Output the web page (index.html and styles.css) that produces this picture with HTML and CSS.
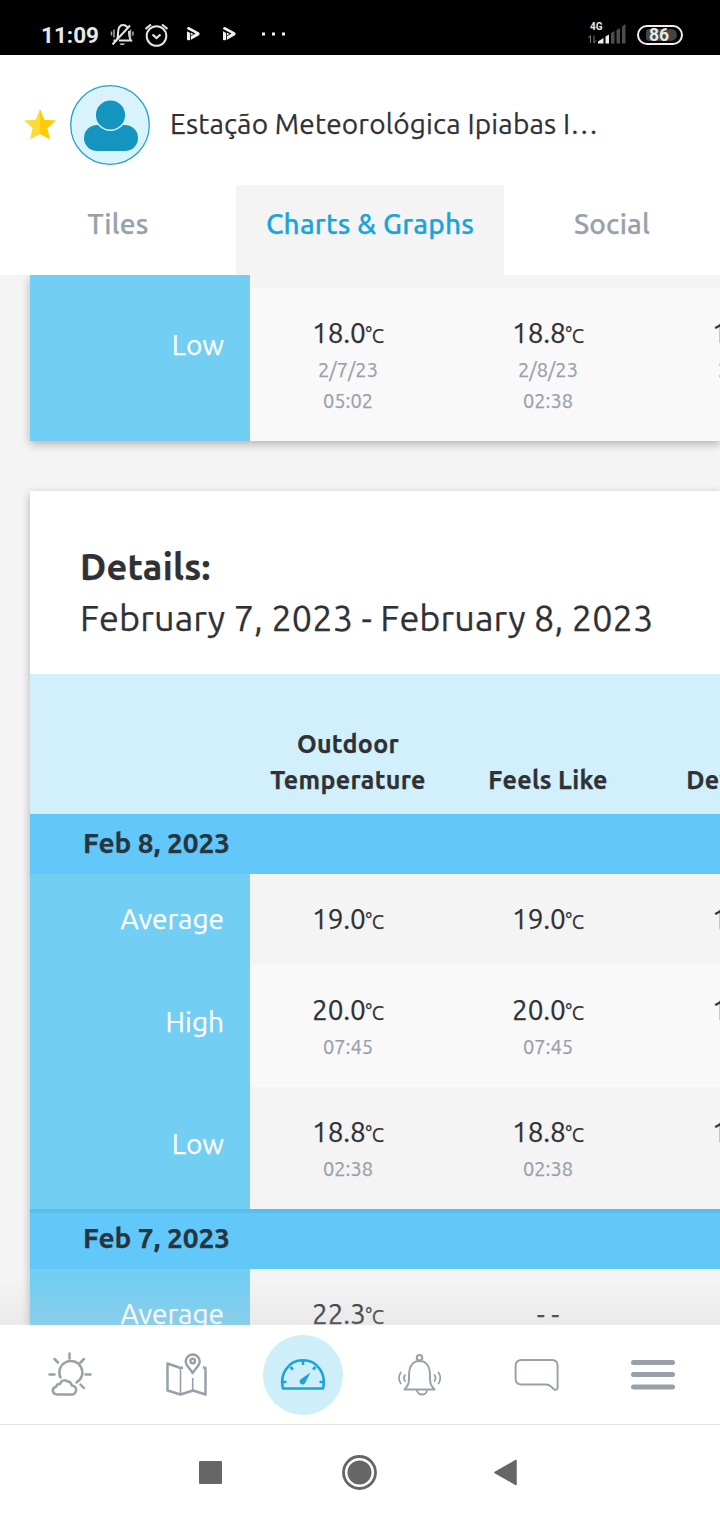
FILE: index.html
```html
<!DOCTYPE html>
<html lang="en">
<head>
  <meta charset="UTF-8" />
  <meta name="viewport" content="width=device-width, initial-scale=1.0" />
  <title>Estação Meteorológica Ipiabas</title>
  <link rel="stylesheet" href="styles.css">
</head>
<body>
  <div class="status-bar">
    <span class="clock">11:09</span>
    <svg class="status-icons" width="190" height="30" viewBox="110 20 190 30" fill="none" stroke="#e4e4e4" stroke-width="2">
      <!-- muted bell -->
      <path d="M113.500 40.500h3c1.500-2 1.500-3 1.500-7 0-5 1.500-8.500 5-8.500 2 0 3.200.8 4.200 2M129 31c0 5 .3 7 2 9.500H119M112.500 44.500L130 25.500" />
      <path d="M119.500 43.500a3 2.500 0 0 0 5.500 0z" fill="#e4e4e4" stroke="none" />
      <path d="M114 29.500v8M111.500 31.500v4M130.500 29.500v8M133 31.500v4" stroke="#aaa" stroke-width="1.500" />
      <!-- alarm -->
      <circle cx="156.500" cy="36" r="9.800" />
      <path d="M152.500 34.500l4 3.500 4-3.500M145.500 29l5.500-4.500M167.500 29l-5.500-4.500" stroke-width="2.200" />
      <g fill="#f2f2f2" stroke="none">
        <path id="play" d="M187 31.200l3.200 1.700v6.800q-1.600 1.300-3.200 0zM187 28.500q.8-2 2.500-1.200l9.500 5.300q1.500 1.200 0 2.600l-8 4.600v-3.600l4.500-2.600-8.500-4.600zM191 32.800l2.500 1.200-2.500 1.600z" />
        <use href="#play" x="36" />
        <path d="M262 32.500h3v3h-3zM272 32.500h3v3h-3zM282 32.500h3v3h-3z" />
      </g>
    </svg>
    <div class="signal">
      <span class="network">4G</span>
      <svg width="40" height="22" viewBox="587 25 40 22">
        <path d="M590.500 44v-7M588.500 39l2-2.500M594 36.500v7.500M596 41.500l-2 2.500" stroke="#777" fill="none" />
        <path d="M598 44.500v-2l5.500-3.500v5.500zM605.500 37.500l3.500-2v9h-3.500z" fill="#eee" />
        <path d="M611 34l3.500-2v12.500H611zM616.500 31l3.500-2v15.500h-3.500zM622 27.500l3.500-2.500v19.500H622z" fill="#4c4c4c" />
      </svg>
    </div>
    <div class="battery"><span class="battery-level">86</span></div>
  </div>

  <header class="station">
    <svg class="star" width="32" height="31" viewBox="0 0 32 31">
      <path d="M16 0l4.300 10.800L32 11.600l-8.600 7.400 2.600 11.500L16 25z" fill="#ffcb05" />
      <path d="M16 0l-4.300 10.800L0 11.600 8.600 19 6 30.500 16 25z" fill="#ffdb3a" />
    </svg>
    <svg class="avatar" width="80" height="80" viewBox="0 0 80 80">
      <circle cx="40" cy="40" r="39.300" fill="#d8f3fa" stroke="#27a0cc" stroke-width="1.300" />
      <rect x="14" y="40" width="54" height="26" rx="13" fill="#1395c0" />
      <circle cx="40.500" cy="30" r="15.300" fill="#1395c0" stroke="#d8f3fa" stroke-width="1.400" />
    </svg>
    <h1>Estação Meteorológica Ipiabas I…</h1>
  </header>

  <nav class="tabs">
    <a class="tab tab-tiles">Tiles</a>
    <a class="tab tab-charts active">Charts &amp; Graphs</a>
    <a class="tab tab-social">Social</a>
  </nav>

  <main>
    <section class="card summary">
      <div class="row spacer"><div class="label"></div></div>
      <div class="row light tall">
        <div class="label">Low</div>
        <div class="cell"><p>18.0<small>°C</small></p><time>2/7/23</time><time>05:02</time></div>
        <div class="cell"><p>18.8<small>°C</small></p><time>2/8/23</time><time>02:38</time></div>
        <div class="cell"><p>18.0<small>°C</small></p><time>2/7/23</time></div>
      </div>
    </section>

    <section class="card details">
      <div class="details-title">
        <h2>Details:</h2>
        <p>February 7, 2023 - February 8, 2023</p>
      </div>
      <div class="row head">
        <div class="head-blank"></div>
        <div class="cell">Outdoor<br>Temperature</div>
        <div class="cell">Feels Like</div>
        <div class="cell">Dew Point</div>
      </div>
      <div class="date">Feb 8, 2023</div>
      <div class="row average">
        <div class="label">Average</div>
        <div class="cell"><p>19.0<small>°C</small></p></div>
        <div class="cell"><p>19.0<small>°C</small></p></div>
        <div class="cell"><p>18.5<small>°C</small></p></div>
      </div>
      <div class="row light">
        <div class="label">High</div>
        <div class="cell"><p>20.0<small>°C</small></p><time>07:45</time></div>
        <div class="cell"><p>20.0<small>°C</small></p><time>07:45</time></div>
        <div class="cell"><p>19.0<small>°C</small></p></div>
      </div>
      <div class="row">
        <div class="label">Low</div>
        <div class="cell"><p>18.8<small>°C</small></p><time>02:38</time></div>
        <div class="cell"><p>18.8<small>°C</small></p><time>02:38</time></div>
        <div class="cell"><p>18.0<small>°C</small></p></div>
      </div>
      <div class="date date-next">Feb 7, 2023</div>
      <div class="row average">
        <div class="label">Average</div>
        <div class="cell"><p>22.3<small>°C</small></p></div>
        <div class="cell"><p class="empty">- -</p></div>
      </div>
    </section>
    <div class="fade"></div>
  </main>

  <nav class="bottom-nav">
    <a><svg width="48" height="48" viewBox="46 1351 48 48">
      <path d="M60.500 1377.500a11.500 11.500 0 1 1 16 5M69.500 1353.500v5M54.500 1359l3.500 3.500M84 1359l-3.500 3.500M49.500 1374.500h5M85.500 1374.500h5M80.500 1384.500l3.300 3.500" />
      <path d="M57 1394.500h14.500a4.500 4.500 0 0 0 .3-9c-.8-3-2.200-4.500-4.300-4-3.500-2.500-6.500-.5-7.500 2.500-3-.3-3.600 1-3.800 2.700-5 1-4.200 7.300.8 7.800z" />
    </svg></a>
    <a><svg width="48" height="48" viewBox="163 1351 48 48">
      <path d="M183 1367.500l-2.500.5-13-4.500v27l13 4 12.500-4 12.500 4v-26.500l-2.500-.8" stroke-linecap="butt" />
      <path d="M180.500 1368v26M192.700 1378v13" stroke-width="1.600" stroke-linecap="butt" />
      <path d="M192.700 1373c-3-5-7-7.500-7-11.500a7 7 0 0 1 14 0c0 4-4 6.500-7 11.500z" />
      <circle cx="192.700" cy="1361" r="2.300" />
    </svg></a>
    <a class="current"><svg width="48" height="48" viewBox="279 1351 48 48">
      <path d="M283 1388.500h40c3.500-14-5-28.200-20-28.200s-23.500 14.200-20 28.200zM303 1361v4M290.500 1367l2.500 2.500M315.500 1367l-2.500 2.500M283 1382h3.500M319.500 1382h3.500" stroke-linecap="butt" stroke-width="2.600" />
      <path d="M310.500 1372.500l-9.800 6.700a3 3 0 1 0 4.600 3.600z" fill="#1ba4dc" stroke="none" />
    </svg></a>
    <a><svg width="48" height="48" viewBox="396 1351 48 48">
      <path d="M404.500 1389.500h30c-4.500-5.500-4.500-6-4.500-14 0-8.500-3.500-14.500-10.500-14.500s-10.500 6-10.500 14.500c0 8 0 8.500-4.500 14zM417 1390a5 4.500 0 0 0 10 0" stroke-width="2" />
      <circle cx="419.500" cy="1357.800" r="2.800" stroke-width="2" />
      <path d="M405 1375c-1.500 2-1.500 4 0 6M400.800 1372.500c-2.300 3.500-2.300 7.500 0 11M434.500 1375c1.500 2 1.500 4 0 6M438.500 1372.500c2.300 3.500 2.300 7.500 0 11" stroke-width="1.700" />
    </svg></a>
    <a><svg width="48" height="48" viewBox="512.400 1351 48 48">
      <path d="M522 1360h30.500q5.500 0 5.500 6v21c0 3.500-2.500 3.500-4.500 1.500-2.500-2.800-4-4-7-4H522q-6 0-6-6V1366q0-6 6-6z" stroke-width="1.900" />
    </svg></a>
    <a><svg width="48" height="48" viewBox="629 1351 48 48">
      <path d="M633.500 1362.500h39M633.500 1374.500h39M633.500 1387h39" stroke-width="5" />
    </svg></a>
  </nav>

  <footer class="system-nav">
    <svg width="360" height="40" viewBox="0 0 360 40" fill="#666">
      <rect x="19" y="9" width="23" height="23" rx="1" />
      <circle cx="179.500" cy="20.500" r="16" fill="none" stroke="#666" stroke-width="2.800" />
      <circle cx="179.500" cy="20.500" r="12" />
      <path d="M315 20.500L336 8.500v24z" stroke="#666" stroke-width="1.500" stroke-linejoin="round" />
    </svg>
  </footer>
</body>
</html>
```

FILE: styles.css
```css
* {
  box-sizing: border-box;
}

body {
  margin: 0;
  width: 720px;
  height: 1520px;
  display: flex;
  flex-direction: column;
  overflow: hidden;
  background-color: #fff;
  color: #303135;
  font-family: Ubuntu, "Noto Sans", sans-serif;
  -webkit-text-stroke: 0.25px;
}

h1,
h2,
p {
  margin: 0;
  font-weight: 400;
}

svg {
  display: block;
}

/* phone status bar */
.status-bar {
  height: 55px;
  flex: none;
  display: flex;
  align-items: center;
  padding: 14px 37px 0 41px;
  background-color: #000;
  color: #e8e8e8;
  font-family: Roboto, sans-serif;
  -webkit-text-stroke: 0;
}

.clock {
  width: 69px;
  font-size: 22.5px;
  font-weight: 700;
  white-space: nowrap;
}

.signal {
  width: 40px;
  margin-left: auto;
  margin-right: 10px;
  position: relative;
}

.network {
  position: absolute;
  left: 3px;
  top: -3px;
  font-size: 10px;
  line-height: 12px;
  font-weight: 700;
}

.battery {
  width: 46px;
  height: 20px;
  padding: 2px 4px 2px 7px;
  border: 2px solid #eee;
  border-radius: 10px;
}

.battery-level {
  display: block;
  height: 12px;
  padding-left: 3px;
  border-radius: 3px 6px 6px 3px;
  background-color: #444;
  font-size: 17.5px;
  line-height: 12px;
  font-weight: 700;
}

/* station header */
.station {
  height: 130px;
  flex: none;
  display: flex;
  align-items: center;
  padding: 10px 24px 0;
}

.star {
  margin-bottom: 2px;
}

.avatar {
  margin: 0 20px 0 14px;
}

.station h1 {
  margin-bottom: 4px;
  font-size: 28px;
  letter-spacing: 0.19px;
  white-space: nowrap;
}

.tabs {
  height: 90px;
  flex: none;
  display: flex;
}

.tab {
  padding-top: 20px;
  text-align: center;
  font-size: 28px;
  line-height: 38px;
  letter-spacing: 0.2px;
  font-weight: 500;
  color: #98a1ab;
}

.tab-tiles {
  width: 236px;
}

.tab-charts {
  width: 268px;
}

.tab-social {
  width: 216px;
}

.tab.active {
  background-color: #f4f4f4;
  color: #1ba4dc;
}

/* data cards */
main {
  height: 1050px;
  flex: none;
  position: relative;
  overflow: hidden;
  padding-left: 30px;
  background-color: #f4f4f4;
}

.card {
  box-shadow: 0 3px 9px rgba(0, 0, 0, 0.28);
}

.summary {
  margin-bottom: 50px;
}

.details {
  background-color: #fff;
}

.details-title {
  height: 183px;
  padding: 50px 50px 0;
}

.details-title h2 {
  font-size: 36px;
  line-height: 52px;
  letter-spacing: 0.3px;
  font-weight: 700;
}

.details-title p {
  font-size: 36px;
  line-height: 49px;
  letter-spacing: 0.12px;
  white-space: nowrap;
}

.row {
  height: 122px;
  display: flex;
  overflow: hidden;
  background-color: #f4f4f4;
}

.row.light {
  background-color: #f9f9f9;
}

.row.spacer {
  height: 13px;
}

.row.tall {
  height: 153px;
}

.row.average {
  height: 91px;
}

.label {
  width: 220px;
  flex: none;
  padding: 38px 26px 0 0;
  background-color: #72cef3;
  color: #fff;
  text-align: right;
  font-size: 28px;
  line-height: 38px;
}

.average .label {
  padding-top: 26px;
}

.cell {
  width: 200px;
  flex: none;
  padding: 26px 4px 0 0;
  text-align: center;
}

.cell p {
  margin-bottom: -1px;
  font-size: 28px;
  line-height: 38px;
  letter-spacing: -0.2px;
}

.cell small {
  font-size: 20px;
}

.cell .empty {
  letter-spacing: 0;
}

.cell time {
  display: block;
  font-size: 20px;
  line-height: 31px;
  color: #98a1ab;
}

.row.head {
  height: 140px;
  align-items: flex-end;
  padding-bottom: 16px;
  background-color: #d2effc;
}

.head-blank {
  width: 220px;
  flex: none;
}

.head .cell {
  padding-top: 0;
  font-size: 25px;
  line-height: 36px;
  letter-spacing: 0.3px;
  font-weight: 700;
  white-space: nowrap;
}

.date {
  height: 60px;
  padding-left: 53px;
  background-color: #62c8fa;
  color: #263640;
  font-size: 28px;
  line-height: 57px;
  letter-spacing: -0.05px;
  font-weight: 700;
}

.date-next {
  border-top: 4px solid #5abdec;
  line-height: 50px;
}

/* shade cast by the bottom bar */
.fade {
  position: absolute;
  left: 0;
  right: 0;
  bottom: 0;
  height: 46px;
  background: linear-gradient(rgba(205, 205, 205, 0), rgba(205, 205, 205, 0.26));
}

/* app navigation */
.bottom-nav {
  height: 100px;
  flex: none;
  display: flex;
  justify-content: space-between;
  align-items: center;
  padding: 0 25px 0 27px;
  border-bottom: 1px solid #e2e3e4;
}

.bottom-nav a {
  width: 80px;
  height: 80px;
  margin: 0 2px 0 3px;
  display: flex;
  justify-content: center;
  align-items: center;
  border-radius: 50%;
}

.bottom-nav svg {
  fill: none;
  stroke: #98a1a9;
  stroke-width: 2.5;
  stroke-linecap: round;
  stroke-linejoin: round;
}

.bottom-nav .current {
  background-color: #ceeefa;
}

.bottom-nav .current svg {
  stroke: #1ba4dc;
}

.system-nav {
  flex: 1;
  display: flex;
  justify-content: center;
  padding-top: 27px;
}
```
